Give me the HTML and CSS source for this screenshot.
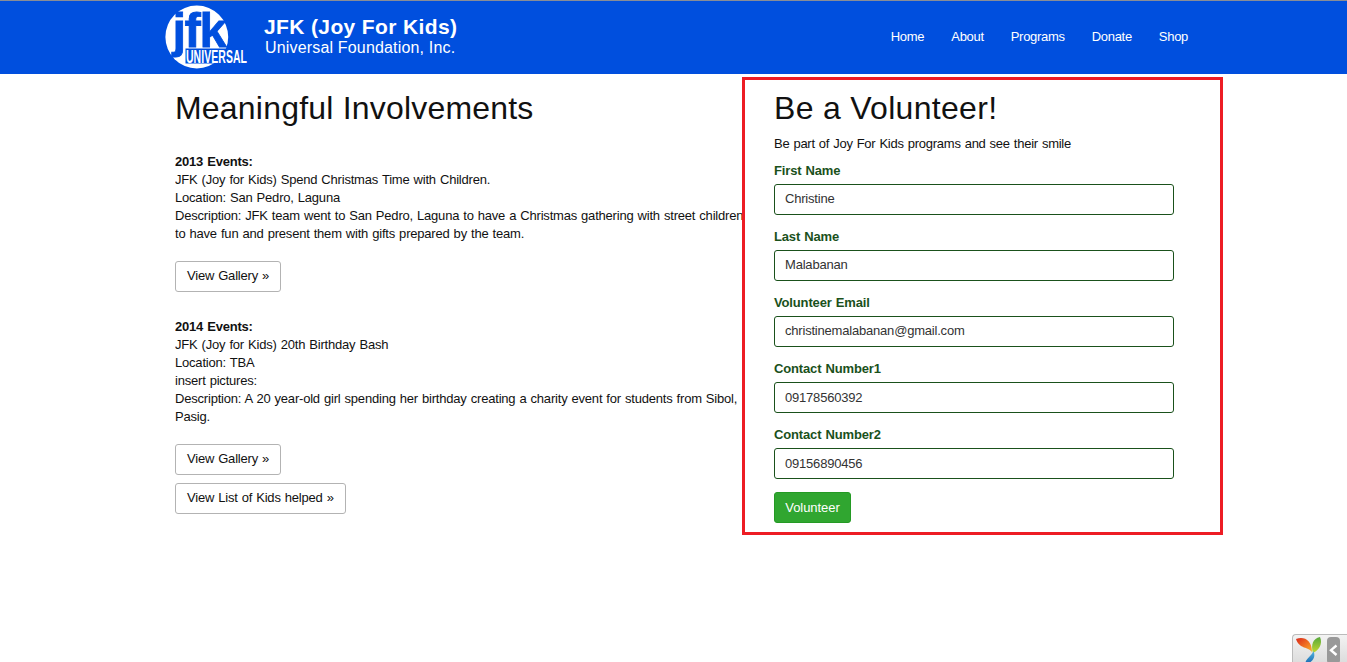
FILE: index.html
```html
<!DOCTYPE html>
<html lang="en">
<head>
<meta charset="utf-8">
<title>JFK (Joy For Kids) Universal Foundation, Inc.</title>
<link rel="stylesheet" href="styles.css">
</head>
<body>
<header class="topbar">
  <a class="brand">
    <svg class="logo" width="84" height="66" viewBox="0 0 84 66">
      <circle cx="32.8" cy="33" r="31.4" fill="#fff"/>
      <path d="M21.5 44.500H83V59.500H21.5Z" fill="#004fde"/>
      <text class="logo-jfk" x="8.6 20.5 35.5" y="42.5">jfk</text>
      <text class="logo-name" transform="translate(22 58.5) scale(.565 1)" textLength="108">UNIVERSAL</text>
    </svg>
    <span class="brand-text"><strong>JFK (Joy For Kids)</strong><span>Universal Foundation, Inc.</span></span>
  </a>
  <nav class="nav"><a>Home</a><a>About</a><a>Programs</a><a>Donate</a><a>Shop</a></nav>
</header>
<main class="content">
  <section class="events">
    <h1>Meaningful Involvements</h1>
    <article class="event">
      <b>2013 Events:</b>
      <p>JFK (Joy for Kids) Spend Christmas Time with Children.</p>
      <p>Location: San Pedro, Laguna</p>
      <p>Description: JFK team went to San Pedro, Laguna to have a Christmas gathering with street children<br>to have fun and present them with gifts prepared by the team.</p>
      <a class="btn gallery">View Gallery »</a>
    </article>
    <article class="event">
      <b>2014 Events:</b>
      <p>JFK (Joy for Kids) 20th Birthday Bash</p>
      <p>Location: TBA</p>
      <p>insert pictures:</p>
      <p>Description: A 20 year-old girl spending her birthday creating a charity event for students from Sibol,<br>Pasig.</p>
      <a class="btn gallery">View Gallery »</a>
      <a class="btn kids">View List of Kids helped »</a>
    </article>
  </section>
  <section class="volunteer">
    <h1>Be a Volunteer!</h1>
    <p class="lead">Be part of Joy For Kids programs and see their smile</p>
    <form>
      <label>First Name</label><div class="field">Christine</div>
      <label>Last Name</label><div class="field">Malabanan</div>
      <label>Volunteer Email</label><div class="field">christinemalabanan@gmail.com</div>
      <label>Contact Number1</label><div class="field low">09178560392</div>
      <label>Contact Number2</label><div class="field low">09156890456</div>
      <button type="button" class="submit">Volunteer</button>
    </form>
  </section>
</main>
<aside class="debug">
  <svg width="55" height="28" viewBox="0 0 55 28">
    <defs>
      <linearGradient id="r" x1="0" y1="0" x2="1" y2="1"><stop offset="0" stop-color="#d9291c"/><stop offset=".5" stop-color="#ee6a22"/><stop offset="1" stop-color="#f9b52c"/></linearGradient>
      <linearGradient id="g" x1="0" y1="0" x2="0" y2="1"><stop offset="0" stop-color="#55a83c"/><stop offset="1" stop-color="#c6d92e"/></linearGradient>
      <linearGradient id="b" x1="0" y1="0" x2="0" y2="1"><stop offset="0" stop-color="#56b5df"/><stop offset="1" stop-color="#1261ad"/></linearGradient>
    </defs>
    <path d="M3 4C11 1 19 5 19 17C16 12 6 14 3 4Z" fill="url(#r)"/>
    <path d="M27 2C30 9 26 15 20 18C17.500 10 20 3.500 27 2Z" fill="url(#g)"/>
    <path d="M20.500 16C23 22 20 27 12 30C12 24 18 22 20.500 16Z" fill="url(#b)"/>
    <rect x="34" y="2" width="13" height="27" rx="4" fill="#999"/>
    <path d="M43.500 10.500L38 15.200L43.500 20" fill="none" stroke="#fff" stroke-width="2.400"/>
  </svg>
</aside>
</body>
</html>
```
FILE: styles.css
```css
* { box-sizing: border-box; }
body { margin: 0; height: 662px; overflow: hidden; background: #fff; color: #111; font: 13px/18px "Liberation Sans", Arial, sans-serif; letter-spacing: -.2px; word-spacing: .65px; }
p, h1 { margin: 0; }
.topbar { height: 74px; padding: 3px 159px 0 164px; border-top: 1px solid #898d96; background: #004fde; color: #fff; display: flex; justify-content: space-between; align-items: flex-start; }
.brand { display: flex; }
.logo { display: block; letter-spacing: 0; word-spacing: 0; font-weight: bold; }
.logo-jfk { font-size: 49px; fill: #004fde; stroke: #004fde; stroke-width: .8px; }
.logo-name { font-size: 18.5px; fill: #fff; }
.brand-text { display: flex; flex-direction: column; padding: 12px 0 0 16px; white-space: nowrap; word-spacing: 0; }
.brand-text strong { font-size: 21px; line-height: 22px; letter-spacing: .37px; }
.brand-text span { font-size: 16px; line-height: 20px; padding-left: 1px; letter-spacing: .17px; }
.nav { display: flex; gap: 27px; padding-top: 24px; letter-spacing: -.3px; }
.content { display: flex; padding: 3px 0 0 175px; }
.events { width: 567px; padding-top: 12px; white-space: nowrap; overflow: hidden; }
h1 { font-size: 32px; line-height: 38px; font-weight: normal; letter-spacing: .2px; word-spacing: 0; }
.event { display: flex; flex-direction: column; align-items: flex-start; margin-top: 26px; }
.btn { height: 31px; border: 1px solid #b3b3b3; border-radius: 3px; padding: 5px 0 0 11px; }
.gallery { width: 106px; margin-top: 18px; }
.kids { width: 171px; margin-top: 8px; }
.volunteer { width: 481px; height: 458px; border: 3px solid #ed1c24; padding: 9px 46px 0 29px; }
.volunteer h1 { letter-spacing: .3px; }
.lead { margin-top: 8px; letter-spacing: -.25px; }
form { margin-top: 9px; }
label { display: block; color: #1a511b; font-weight: bold; line-height: 18px; letter-spacing: -.15px; }
.field { width: 400px; height: 31px; border: 1px solid #1a511b; border-radius: 3px; margin: 4px 0 13px; padding: 5px 10px; color: #333; }
.field.low { padding-top: 6px; }
.submit { display: block; width: 77px; height: 31px; margin-top: 13px; padding: 0; border: 1px solid #249a24; border-radius: 3px; background: #30a630; color: #fff; font: inherit; letter-spacing: -.05px; }
.debug { position: absolute; right: 0; bottom: 0; width: 55px; height: 28px; border: 1px solid #bbb; border-width: 1px 0 0 1px; border-radius: 4px 0 0 0; background: linear-gradient(#f3f3f3, #ddd); overflow: hidden; }
```
